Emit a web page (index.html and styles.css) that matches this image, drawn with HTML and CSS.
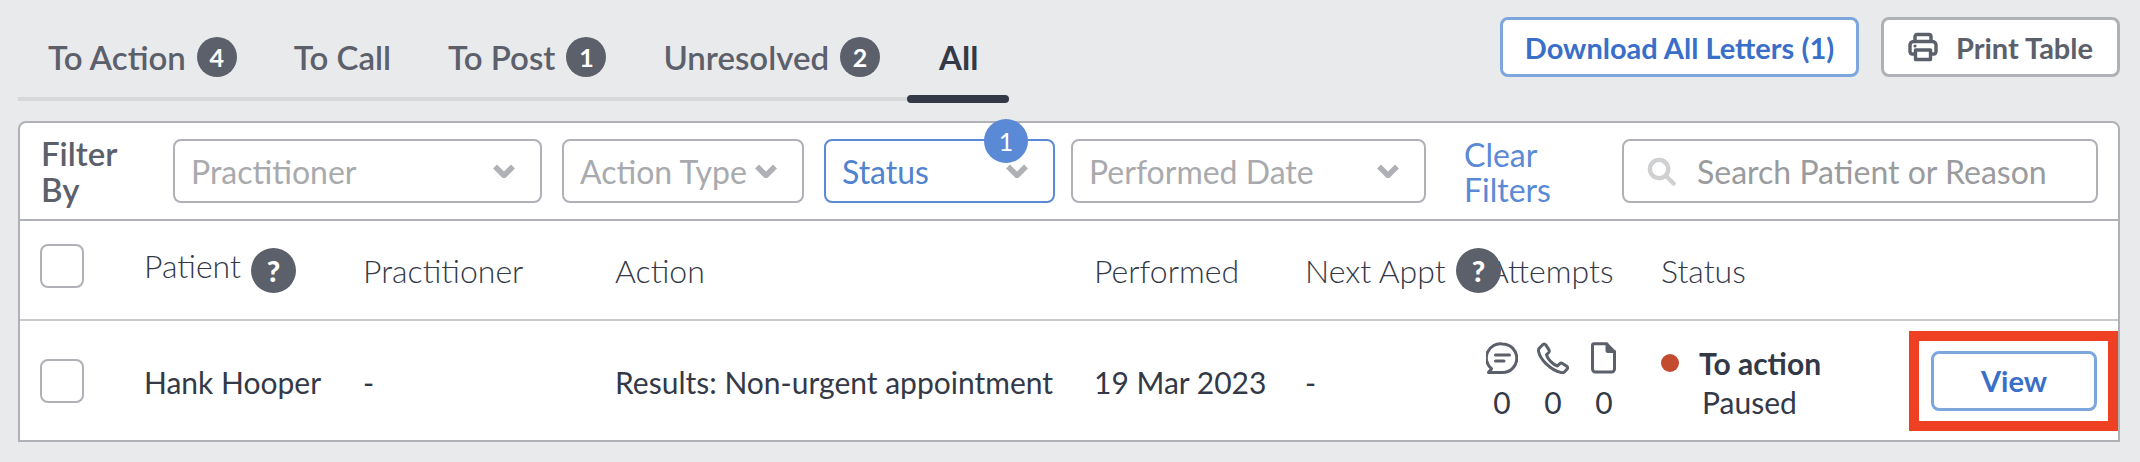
FILE: index.html

```html
<!DOCTYPE html>
<html>
  <head>
    <meta charset="utf-8">
    <title>Actions</title>
    <link rel="stylesheet" href="styles.css">
  </head>
  <body>
    <div class="top-bar">
      <div class="tabs">
        <div class="tab">To Action <span class="count">4</span></div>
        <div class="tab">To Call</div>
        <div class="tab">To Post <span class="count">1</span></div>
        <div class="tab">Unresolved <span class="count">2</span></div>
        <div class="tab active">All</div>
      </div>
      <div class="actions">
        <button class="btn btn-blue">Download All Letters (1)</button>
        <button class="btn btn-grey">
          <svg class="print-icon" viewBox="0 0 30 30" fill="none" stroke="#5c606b" stroke-width="3.4" stroke-linejoin="round">
            <path d="M7 10V4.5a2 2 0 0 1 2-2h12a2 2 0 0 1 2 2V10"/>
            <path d="M7 22H4a2.4 2.4 0 0 1-2-2v-7a3.5 3.5 0 0 1 3.5-3.5h19a3.5 3.5 0 0 1 3.5 3.5v7a2.4 2.4 0 0 1-2 2h-3"/>
            <path d="M7.5 18h15v9.5h-15z"/>
            <circle cx="7" cy="14" r="1.6" fill="#5c606b" stroke="none"/>
          </svg>
          Print Table
        </button>
      </div>
    </div>

    <div class="card">
      <div class="filters">
        <div class="filter-label">Filter<br>By</div>
        <div class="select select-practitioner">Practitioner
          <svg class="chevron" viewBox="0 0 24 14"><path d="M3 2.5l9 9 9-9"/></svg>
        </div>
        <div class="select select-action">Action Type
          <svg class="chevron" viewBox="0 0 24 14"><path d="M3 2.5l9 9 9-9"/></svg>
        </div>
        <div class="select select-status">Status
          <svg class="chevron" viewBox="0 0 24 14"><path d="M3 2.5l9 9 9-9"/></svg>
          <span class="status-count">1</span>
        </div>
        <div class="select select-date">Performed Date
          <svg class="chevron" viewBox="0 0 24 14"><path d="M3 2.5l9 9 9-9"/></svg>
        </div>
        <a class="clear">Clear<br>Filters</a>
        <div class="search">
          <svg class="search-icon" viewBox="0 0 30 30" fill="none" stroke="#cfd0d2" stroke-width="4.5" stroke-linecap="round">
            <circle cx="12.5" cy="12.5" r="9.5"/>
            <path d="M20 20l7.5 7.5"/>
          </svg>
          Search Patient or Reason
        </div>
      </div>

      <div class="grid head">
        <div><span class="checkbox checkbox-head"></span></div>
        <div class="patient-head"><span class="patient-label">Patient</span><span class="help">?</span></div>
        <div>Practitioner</div>
        <div>Action</div>
        <div>Performed</div>
        <div class="next-appt">Next Appt<span class="help help-over">?</span></div>
        <div>Attempts</div>
        <div>Status</div>
        <div></div>
      </div>

      <div class="grid row">
        <div><span class="checkbox"></span></div>
        <div class="cell-text">Hank Hooper</div>
        <div class="cell-text">-</div>
        <div class="cell-text">Results: Non-urgent appointment</div>
        <div class="cell-text">19 Mar 2023</div>
        <div class="cell-text">-</div>
        <div class="attempts">
          <div class="attempt">
            <svg viewBox="0 0 32 32" fill="none" stroke="#5c606b" stroke-width="3" stroke-linecap="round" stroke-linejoin="round">
              <path d="M16.5 2a14 14 0 0 1 0 28.5H2.5l3-3.8A14 14 0 0 1 16.5 2z"/>
              <path d="M9.5 13h14M9.5 19h8.5"/>
            </svg>
            <span>0</span>
          </div>
          <div class="attempt">
            <svg viewBox="0 0 32 32" fill="none" stroke="#5c606b" stroke-width="3" stroke-linecap="round" stroke-linejoin="round">
              <path d="M2 6.5L6 2.5c1-.8 2-.6 2.8.4l3.2 5c.5 1 .4 1.8-.3 2.6l-2.2 2.2c1.5 5 6.3 9.8 11 11.3l2.3-2.3c.8-.7 1.7-.8 2.6-.3l4.4 2.8c1 .7 1.2 1.8.4 2.8l-2.6 2.8c-.8.8-2 1-3.2.8C13 28 3 17 1.6 9.5c-.2-1.2 0-2.2.4-3z"/>
            </svg>
            <span>0</span>
          </div>
          <div class="attempt">
            <svg viewBox="0 0 32 32" fill="none" stroke="#5c606b" stroke-width="3" stroke-linecap="round" stroke-linejoin="round">
              <path d="M6 1.8h12.5l8 8V27a3 3 0 0 1-3 3H7.5a3 3 0 0 1-3-3V3.3a1.5 1.5 0 0 1 1.5-1.5z"/>
              <path d="M19 2v6.5a1 1 0 0 0 1 1h6.5" fill="#5c606b"/>
            </svg>
            <span>0</span>
          </div>
        </div>
        <div class="status-cell">
          <span class="dot"></span>
          <div>
            <div class="status-main">To action</div>
            <div class="status-sub">Paused</div>
          </div>
        </div>
        <div class="view-cell">
          <button class="btn btn-blue btn-view">View</button>
        </div>
      </div>
    </div>
  </body>
</html>
```

FILE: styles.css

```css
* {
  box-sizing: border-box;
}

body {
  margin: 0;
  padding: 0 20px 0 18px;
  background-color: #e9eaec;
  color: #333947;
  font-family: Lato, "Open Sans", sans-serif;
  font-size: 30px;
}

.top-bar {
  display: flex;
  justify-content: space-between;
  height: 121px;
}

.tabs {
  display: flex;
  padding-top: 37px;
  height: 101px;
}

.tab {
  position: relative;
  display: flex;
  align-items: center;
  gap: 11px;
  height: 64px;
  padding: 0 27px 20px 30px;
  border-bottom: 4px solid #d6d7d9;
  color: #5c606b;
  font-size: 33px;
  font-weight: 600;
  white-space: nowrap;
}

.tab.active {
  padding: 0 31px 20px 32px;
  color: #333947;
  font-weight: 700;
}

.tab.active::after {
  content: "";
  position: absolute;
  left: 0;
  right: 0;
  bottom: -6px;
  height: 8px;
  border-radius: 4px;
  background-color: #333947;
}

.count {
  width: 40px;
  height: 40px;
  border-radius: 50%;
  background-color: #5c606b;
  color: #fff;
  font-size: 25px;
  font-weight: 700;
  line-height: 40px;
  text-align: center;
}

.actions {
  display: flex;
  gap: 22px;
  padding-top: 17px;
}

.btn {
  height: 60px;
  border-radius: 8px;
  background-color: #fff;
  font-family: inherit;
  font-size: 29px;
  font-weight: 700;
}

.btn-blue {
  width: 359px;
  border: 3px solid #7da6dd;
  color: #3a6fc9;
}

.btn-grey {
  display: flex;
  align-items: center;
  justify-content: center;
  gap: 18px;
  width: 239px;
  border: 3px solid #b0b1b6;
  color: #5c606b;
}

.print-icon {
  width: 30px;
  height: 30px;
}

.card {
  height: 321px;
  border: 2px solid #b0b1b6;
  border-radius: 8px 8px 0 0;
  background-color: #fff;
}

.filters {
  display: flex;
  align-items: center;
  height: 98px;
  padding: 0 20px 0 21px;
  border-bottom: 2px solid #b0b1b6;
  font-size: 32px;
}

.filter-label {
  width: 132px;
  color: #5c606b;
  font-size: 33px;
  font-weight: 600;
  line-height: 36px;
}

.select {
  position: relative;
  display: flex;
  align-items: center;
  justify-content: space-between;
  height: 64px;
  padding: 0 24px 0 16px;
  border: 2px solid #b0b1b6;
  border-radius: 8px;
  color: #a9aaae;
}

.select-practitioner {
  width: 369px;
  margin-right: 20px;
}

.select-action {
  width: 242px;
  margin-right: 20px;
  white-space: nowrap;
}

.select-status {
  width: 231px;
  margin-right: 16px;
  border-color: #5a8ad6;
  color: #4f82cf;
}

.select-date {
  width: 355px;
  margin-right: 38px;
}

.chevron {
  flex: none;
  width: 24px;
  height: 14px;
  fill: none;
  stroke: #b0b1b6;
  stroke-width: 5.5;
}

.status-count {
  position: absolute;
  top: -22px;
  left: 158px;
  width: 44px;
  height: 44px;
  border-radius: 50%;
  background-color: #5a8ad6;
  color: #fff;
  font-size: 25px;
  line-height: 44px;
  text-align: center;
}

.clear {
  width: 158px;
  padding-top: 2px;
  color: #5a8ad6;
  line-height: 35px;
}

.search {
  display: flex;
  align-items: center;
  gap: 21px;
  width: 476px;
  height: 64px;
  padding-left: 23px;
  border: 2px solid #b0b1b6;
  border-radius: 8px;
  color: #9a9b9e;
}

.search-icon {
  width: 29px;
  height: 29px;
}

.grid {
  display: grid;
  grid-template-columns: 104px 219px 252px 479px 211px 183px 173px 248px 209px;
  align-items: center;
  padding-left: 20px;
}

.head {
  height: 100px;
  border-bottom: 2px solid #c9cacd;
  font-size: 32px;
  font-weight: 300;
}

.row {
  height: 119px;
}

.cell-text {
  padding-top: 3px;
}

.checkbox {
  display: block;
  width: 44px;
  height: 44px;
  border: 2px solid #b0b1b6;
  border-radius: 8px;
}

.checkbox-head {
  margin-bottom: 8px;
}

.patient-head {
  display: flex;
  align-items: center;
  gap: 10px;
}

.patient-label {
  padding-bottom: 10px;
}

.help {
  width: 45px;
  height: 45px;
  border-radius: 50%;
  background-color: #5c606b;
  color: #fff;
  font-size: 29px;
  font-weight: 900;
  line-height: 45px;
  text-align: center;
}

.next-appt {
  position: relative;
}

.help-over {
  position: absolute;
  top: -3px;
  left: 151px;
}

.attempts {
  display: flex;
  gap: 1px;
  margin-left: -11px;
}

.attempt {
  display: flex;
  flex-direction: column;
  align-items: center;
  gap: 10px;
  width: 50px;
  line-height: 36px;
}

.attempt svg {
  width: 32px;
  height: 32px;
}

.status-cell {
  display: flex;
  gap: 20px;
}

.dot {
  width: 18px;
  height: 18px;
  margin-top: 12px;
  border-radius: 50%;
  background-color: #c24b30;
}

.status-main {
  font-weight: 700;
  line-height: 42px;
}

.status-sub {
  margin-left: 3px;
  line-height: 36px;
}

.view-cell {
  width: 209px;
  height: 100px;
  padding: 10px 12px;
  border: 10px solid #ee4023;
}

.btn-view {
  display: block;
  width: 166px;
}
```
